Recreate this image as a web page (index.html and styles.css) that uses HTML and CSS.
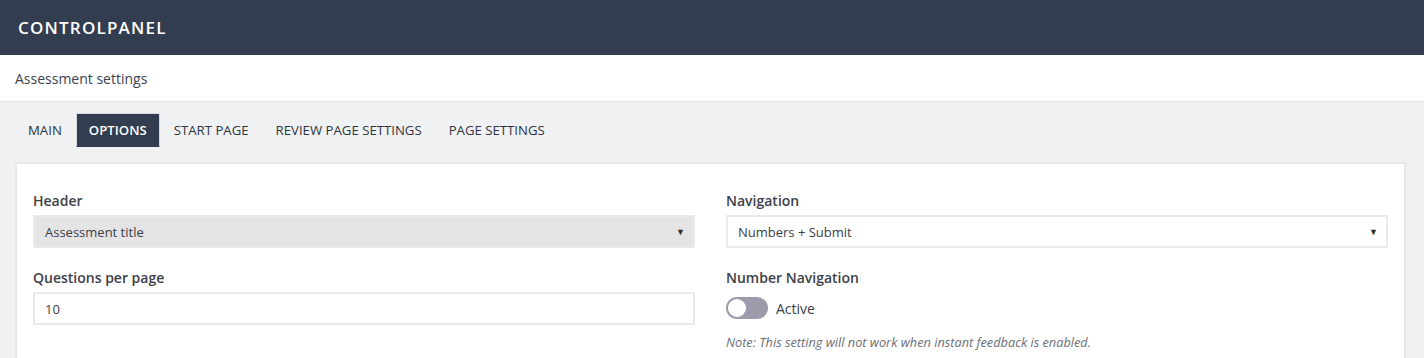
FILE: index.html
```html
<!DOCTYPE html>
<html lang="en">
<head>
  <meta charset="UTF-8" />
  <meta name="viewport" content="width=device-width, initial-scale=1" />
  <title>Controlpanel - Assessment settings</title>
  <link rel="stylesheet" href="styles.css">
</head>
<body>
  <header class="topbar">
    <span class="brand">CONTROLPANEL</span>
  </header>

  <div class="page-title">Assessment settings</div>

  <main class="content">
    <nav class="tabs">
      <a class="tab">MAIN</a>
      <a class="tab active">OPTIONS</a>
      <a class="tab">START PAGE</a>
      <a class="tab">REVIEW PAGE SETTINGS</a>
      <a class="tab">PAGE SETTINGS</a>
    </nav>

    <section class="card">
      <div class="col">
        <div class="field">
          <label>Header</label>
          <div class="select disabled">
            <span>Assessment title</span>
            <span class="caret">&#9660;</span>
          </div>
        </div>
        <div class="field">
          <label>Questions per page</label>
          <div class="input">10</div>
        </div>
      </div>

      <div class="col">
        <div class="field">
          <label>Navigation</label>
          <div class="select">
            <span>Numbers + Submit</span>
            <span class="caret">&#9660;</span>
          </div>
        </div>
        <div class="field">
          <label>Number Navigation</label>
          <div class="switch-row">
            <span class="switch"><span class="knob"></span></span>
            <span>Active</span>
          </div>
          <p class="note">Note: This setting will not work when instant feedback is enabled.</p>
        </div>
      </div>
    </section>
  </main>
</body>
</html>
```

FILE: styles.css
```css
body {
  margin: 0;
  font-family: 'Open Sans', 'Noto Sans', sans-serif;
  color: #3c3f47;
  background: #f0f1f3;
  overflow: hidden;
}
.topbar {
  height: 55px;
  background: #333d50;
  display: flex;
  align-items: center;
  padding: 0 18px;
}
.brand {
  color: #ffffff;
  font-size: 17px;
  font-weight: 600;
  letter-spacing: 1.2px;
}
.page-title {
  height: 46px;
  background: #ffffff;
  border-bottom: 1px solid #e4e5e8;
  padding: 0 15px;
  display: flex;
  align-items: center;
  font-size: 14px;
  color: #3c4150;
}
.content {
  padding: 11px 18px 0 15px;
}
.tabs {
  display: flex;
  gap: 1px;
  margin-bottom: 15px;
}
.tab {
  font-size: 13.2px;
  padding: 0 12px;
  height: 34px;
  box-sizing: border-box;
  display: flex;
  align-items: center;
  color: #2f3340;
  border: 1px solid transparent;
  cursor: pointer;
}
.tab.active {
  background: #333d50;
  color: #ffffff;
  font-weight: 600;
  border-color: #d8d9dd;
  border-bottom-color: transparent;
}
.card {
  background: #ffffff;
  border: 2px solid #e6e7eb;
  border-bottom: none;
  padding: 27px 16px 0 16px;
  display: grid;
  grid-template-columns: 1fr 1fr;
  column-gap: 31px;
  min-height: 200px;
}
.field {
  margin-bottom: 20px;
}
label {
  display: block;
  font-size: 14px;
  font-weight: 600;
  color: #3e4049;
  margin-bottom: 5px;
}
.select, .input {
  height: 33px;
  box-sizing: border-box;
  border: 2px solid #eaeaee;
  background: #ffffff;
  display: flex;
  align-items: center;
  justify-content: space-between;
  padding: 0 8px 0 10px;
  font-size: 13px;
  color: #3b3e47;
}
.select.disabled {
  background: #e4e4e4;
}
.caret {
  font-size: 9px;
  color: #2b2b2b;
}
.switch-row {
  display: flex;
  align-items: center;
  gap: 8px;
  font-size: 14px;
  color: #3b3e47;
  margin-top: 10px;
}
.switch {
  width: 42px;
  height: 22px;
  border-radius: 11px;
  background: #9c9bab;
  display: flex;
  align-items: center;
  padding: 0 2px;
  box-sizing: border-box;
}
.knob {
  width: 18px;
  height: 18px;
  border-radius: 50%;
  background: #ffffff;
}
.note {
  margin: 14px 0 0;
  font-size: 12.75px;
  font-style: italic;
  color: #6c6f78;
}
```
